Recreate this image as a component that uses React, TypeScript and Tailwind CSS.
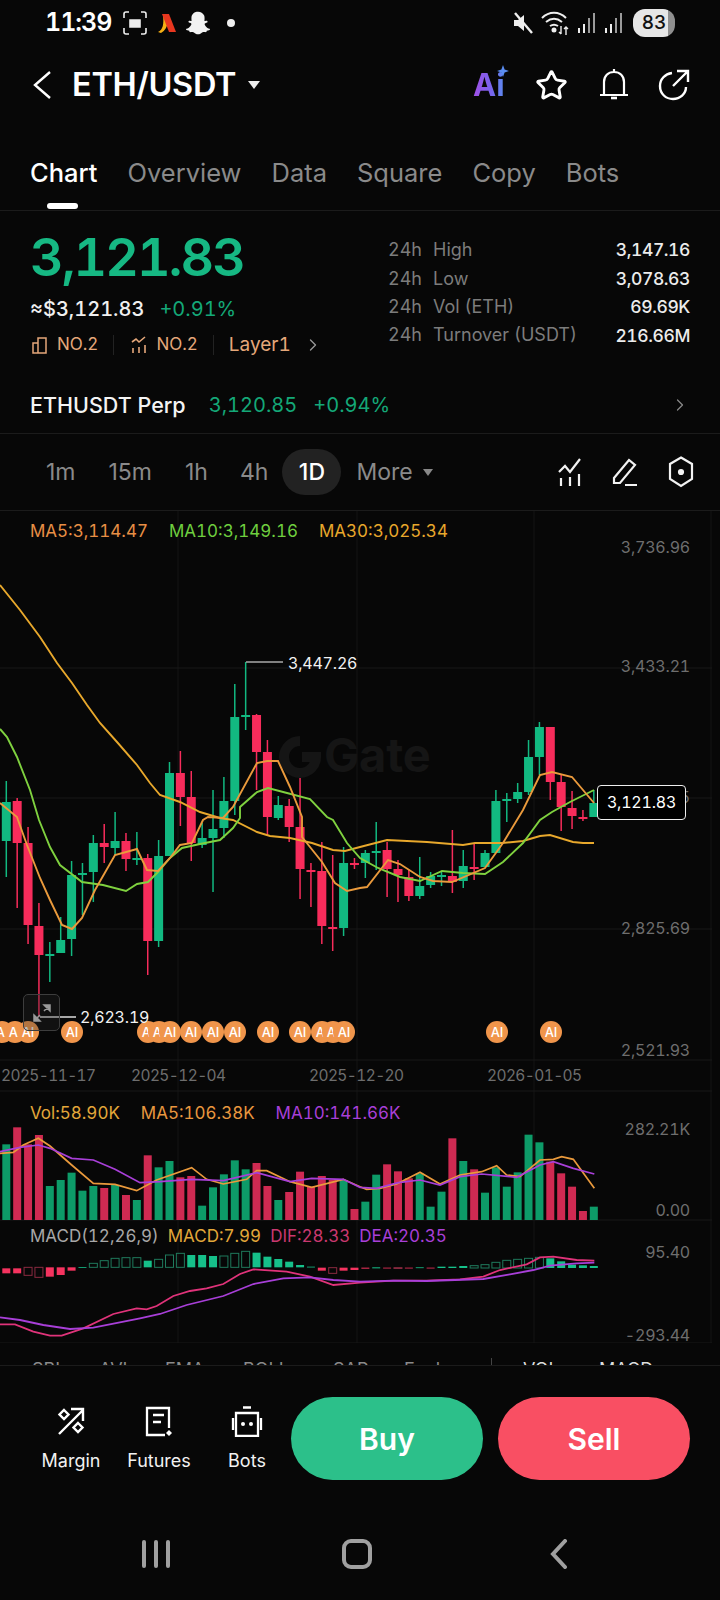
import { Star, ChevronRight } from 'lucide-react'
import { FaSnapchatGhost } from 'react-icons/fa'

// open/close drawn in screen px: [high, bodyTop, bodyBottom, low, up?]
const candles: [number, number, number, number, number][] = [
  [781, 802, 841, 877, 1], [798, 801, 843, 908, 0], [827, 843, 925, 944, 0], [903, 926, 955, 1017, 0],
  [942, 954, 955, 982, 1], [917, 940, 953, 953, 1], [861, 875, 939, 956, 1], [863, 873, 874, 915, 1],
  [835, 843, 872, 902, 1], [824, 843, 847, 863, 0], [812, 841, 848, 855, 1], [833, 841, 859, 871, 0],
  [832, 858, 859, 865, 1], [854, 858, 941, 975, 0], [840, 856, 941, 947, 1], [762, 773, 856, 856, 1],
  [751, 773, 797, 826, 0], [771, 797, 843, 861, 0], [823, 838, 845, 848, 1], [790, 829, 838, 892, 1],
  [777, 801, 828, 838, 1], [684, 717, 801, 815, 1], [662, 715, 717, 730, 1], [714, 715, 752, 790, 0],
  [740, 752, 817, 835, 0], [796, 805, 818, 820, 1], [799, 806, 827, 842, 0], [778, 827, 869, 899, 0],
  [863, 870, 871, 907, 0], [842, 871, 926, 944, 0], [855, 927, 928, 951, 0], [847, 863, 928, 936, 1],
  [858, 863, 864, 869, 0], [850, 853, 863, 878, 1], [822, 851, 853, 870, 1], [842, 850, 869, 897, 0],
  [860, 869, 875, 902, 0], [870, 877, 896, 901, 0], [857, 886, 896, 899, 1], [872, 876, 885, 888, 1],
  [872, 875, 876, 886, 1], [830, 876, 882, 893, 0], [850, 866, 881, 888, 1], [843, 867, 868, 880, 0],
  [850, 853, 867, 867, 1], [790, 801, 853, 853, 1], [793, 799, 800, 822, 1], [783, 792, 799, 803, 1],
  [740, 757, 792, 795, 1], [722, 727, 757, 775, 1], [727, 727, 782, 800, 0], [775, 782, 807, 831, 0],
  [791, 808, 816, 829, 0], [810, 817, 818, 821, 0], [790, 803, 817, 817, 1],
]

const ma30 = '0,585 20,610 40,637 57,663 72,683 87,705 100,723 117,742 137,765 150,783 160,795 180,802 200,812 220,818 233,820 257,832 270,836 290,838 312,843 333,850 345,851 360,847 387,840 427,842 463,845 475,843 502,843 523,841 540,836 550,835 573,842 583,843 594,843'
const ma10 = '0,729 7,737 17,757 30,790 39,820 50,847 60,865 82,882 103,885 126,891 137,884 148,882 158,872 170,858 182,848 200,844 220,840 233,828 240,818 240,807 257,792 268,788 287,793 310,799 327,817 333,820 347,843 360,858 378,868 400,877 420,881 442,871 463,873 485,874 503,862 523,843 540,820 552,812 570,802 594,790'
const ma5 = '0,803 17,817 18,820 27,845 40,878 50,900 62,925 72,929 82,918 95,890 115,855 137,849 147,870 158,871 170,858 180,845 192,843 203,820 208,817 223,818 233,807 257,763 267,761 278,761 290,787 302,817 302,837 322,862 335,883 347,891 360,888 367,887 388,860 400,864 420,877 433,881 452,882 485,868 503,843 523,810 540,775 552,772 572,777 594,803'

const volTop = [163, 112, 163, 135, 288, 270, 248, 302, 288, 294, 285, 315, 330, 196, 232, 213, 262, 258, 347, 292, 253, 211, 238, 219, 288, 330, 306, 245, 290, 258, 270, 270, 357, 335, 254, 223, 244, 265, 250, 350, 305, 145, 213, 238, 308, 232, 290, 247, 134, 157, 215, 250, 290, 363, 350]
const volUp = [1, 0, 0, 0, 1, 1, 1, 1, 1, 0, 1, 0, 1, 0, 1, 1, 0, 0, 1, 1, 1, 1, 1, 0, 0, 1, 0, 0, 0, 0, 0, 1, 0, 1, 1, 0, 0, 0, 1, 1, 1, 0, 1, 0, 1, 1, 1, 1, 1, 1, 0, 0, 0, 0, 1]

const volMa5 = [[0, 190], [40, 187], [70, 165], [115, 145], [150, 168], [215, 225], [280, 280], [345, 283], [410, 302], [470, 270], [575, 233], [620, 268], [670, 282], [740, 268], [770, 242], [800, 242], [870, 275], [935, 292], [1030, 268], [1080, 290], [1100, 298], [1140, 295], [1190, 282], [1260, 247], [1320, 282], [1380, 255], [1445, 245], [1490, 227], [1520, 255], [1560, 260], [1620, 210], [1660, 208], [1685, 200], [1720, 208], [1783, 295]]
const volMa10 = [[0, 185], [60, 172], [115, 165], [150, 175], [215, 205], [280, 210], [345, 238], [420, 278], [480, 275], [575, 268], [670, 272], [770, 248], [870, 275], [935, 265], [1030, 268], [1080, 292], [1130, 295], [1195, 278], [1260, 270], [1320, 285], [1380, 260], [1445, 252], [1550, 262], [1620, 225], [1660, 215], [1720, 235], [1783, 252]]
const dif = [[0, 703], [45, 703], [100, 725], [150, 737], [185, 737], [250, 715], [340, 672], [410, 655], [440, 658], [470, 648], [520, 618], [570, 603], [620, 595], [670, 582], [720, 552], [760, 538], [860, 545], [930, 560], [1000, 585], [1080, 578], [1180, 572], [1280, 572], [1380, 568], [1450, 560], [1500, 540], [1580, 523], [1620, 502], [1660, 500], [1730, 510], [1783, 512]]
const dea = [[0, 682], [60, 690], [130, 705], [210, 717], [280, 713], [420, 685], [480, 672], [560, 645], [670, 618], [760, 582], [850, 565], [930, 562], [1000, 570], [1080, 575], [1180, 572], [1280, 573], [1450, 567], [1530, 553], [1600, 540], [1650, 527], [1730, 520], [1783, 518]]

// macd bars: [top, bottom, kind] kind 0 red fill, 1 red hollow, 2 green fill, 3 green hollow
const macd: [number, number, number][] = [
  [535, 550, 0], [535, 550, 0], [532, 556, 1], [532, 562, 1], [532, 560, 0], [532, 555, 0], [532, 542, 0], [531, 533, 2],
  [520, 532, 3], [512, 532, 3], [505, 532, 3], [503, 532, 3], [503, 532, 3], [512, 532, 2], [508, 532, 3], [495, 532, 3],
  [490, 532, 3], [495, 532, 2], [495, 532, 2], [498, 532, 2], [498, 532, 3], [490, 532, 3], [484, 532, 3], [488, 532, 2],
  [500, 532, 2], [507, 532, 2], [515, 532, 2], [525, 532, 2], [530, 532, 2], [533, 542, 0], [533, 550, 1], [533, 542, 0],
  [533, 540, 0], [533, 536, 0], [532, 535, 2], [533, 535, 0], [533, 534, 1], [533, 534, 0], [532, 534, 2], [533, 534, 0],
  [530, 534, 2], [530, 534, 2], [528, 534, 2], [527, 534, 3], [524, 534, 3], [517, 534, 3], [511, 534, 3], [508, 534, 3],
  [505, 534, 3], [502, 534, 3], [505, 534, 2], [514, 534, 2], [524, 534, 2], [526, 534, 2], [528, 534, 2],
]

const aiBadges = [2, 15, 28, 72, 148, 159, 170, 191, 213, 235, 268, 300, 322, 333, 344, 497, 551]

const cx = (i: number) => 6.3 + 10.88 * i
const toPts = (list: number[][], oy: number) => list.map(([x, y]) => `${x / 3},${oy + y / 3}`).join(' ')

const Stat = ({ label, value }: { label: string; value: string }) => (
  <div className="flex items-center h-[28.4px] text-[18px] leading-none">
    <span className="w-[45px] text-[#7c7c7c]">24h</span>
    <span className="text-[#7c7c7c]">{label}</span>
    <span className="ml-auto text-[#ececec] font-medium text-[17.5px] tracking-[-0.4px]">{value}</span>
  </div>
)

const BottomAction = ({ label, children }: { label: string; children: React.ReactNode }) => (
  <div className="flex flex-col items-center w-[88px]">
    <div className="h-[32px] flex items-center justify-center">{children}</div>
    <span className="mt-[13px] text-[18px] leading-[22px] text-[#f2f2f2]">{label}</span>
  </div>
)

export default function App() {
  return (
    <div className="w-[720px] h-[1600px] overflow-hidden bg-[#070707] text-white [font-family:Inter,sans-serif] tabular-nums flex flex-col">
      {/* status bar */}
      <div className="h-[46px] flex items-center pl-[45px] pr-[45px]">
        <span className="text-[25px] font-semibold w-[78px] tracking-[-1px]">11:39</span>
        <svg width="24" height="24" viewBox="0 0 24 24" fill="none" stroke="#eee" strokeWidth="1.6">
          <path d="M1 7V3q0-2 2-2h3M18 1h3q2 0 2 2v4M23 17v4q0 2-2 2h-3M6 23H3q-2 0-2-2v-4" />
          <path d="M7 9h10v7H7z" fill="#eee" />
        </svg>
        <svg width="20" height="24" viewBox="0 0 20 24" className="ml-[10px]">
          <path d="M1 21c5-2 6-8 5-17l5 4c0 7-3 12-7 14z" fill="#f5b014" />
          <path d="M5 3h7l7 18h-7z" fill="#e8371f" />
        </svg>
        <FaSnapchatGhost className="ml-[9px] text-[#f2f2f2] text-[24px]" />
        <div className="ml-[17px] w-[8px] h-[8px] rounded-full bg-[#eee]" />
        <div className="ml-auto flex items-center">
          <svg width="22" height="24" viewBox="0 0 22 24">
            <path d="M2 9h4l6-5v16l-6-5H2z" fill="#eee" />
            <path d="M3 2l17 20" stroke="#eee" strokeWidth="2.4" />
          </svg>
          <svg width="30" height="28" viewBox="0 0 30 28" fill="none" stroke="#eee" strokeWidth="2" className="ml-[7px]">
            <path d="M1 9c7-7 17-7 24 0M5 13c5-4 11-4 16 0M9 17c3-2 5-2 8 0" />
            <circle cx="13" cy="21" r="1.5" fill="#eee" />
            <path d="M20 17v8m-2-2l2 2M25 26v-8m-2 2l2-2 2 2" strokeWidth="1.4" />
          </svg>
          <svg width="19" height="22" viewBox="0 0 19 22" fill="#9a9a9a" className="ml-[6px]">
            <rect x="1" y="16" width="2" height="5" fill="#eee" />
            <rect x="6" y="12" width="2" height="9" fill="#eee" />
            <rect x="11" y="6" width="2" height="15" />
            <rect x="16" y="1" width="2" height="20" />
          </svg>
          <svg width="19" height="22" viewBox="0 0 19 22" fill="#9a9a9a" className="ml-[8px]">
            <rect x="1" y="16" width="2" height="5" fill="#eee" />
            <rect x="6" y="12" width="2" height="9" fill="#eee" />
            <rect x="11" y="6" width="2" height="15" />
            <rect x="16" y="1" width="2" height="20" />
          </svg>
          <div className="ml-[10px] w-[42px] h-[28px] rounded-[12px] bg-[linear-gradient(90deg,#e6e6e6_83%,#8f8f8f_83%)] text-[#111] text-[19px] font-medium leading-[28px] text-center">
            83
          </div>
        </div>
      </div>

      {/* header */}
      <div className="h-[78px] flex items-center pl-[32px] pr-[30px]">
        <svg width="20" height="30" viewBox="0 0 20 30" fill="none" stroke="#fff" strokeWidth="2.4">
          <path d="M18 2L3 15l15 13" />
        </svg>
        <span className="ml-[20px] text-[32.5px] font-semibold tracking-[-0.3px]">ETH/USDT</span>
        <svg width="14" height="10" viewBox="0 0 14 10" className="ml-[11px]">
          <path d="M1 1h12L7 9z" fill="#eee" />
        </svg>
        <div className="ml-auto flex items-center">
          <div className="relative w-[36px] h-[40px]">
            <span className="absolute left-0 top-[1px] text-[31px] leading-[38px] font-bold bg-[linear-gradient(90deg,#a24fe6,#7a63ec_55%,#5a8cf0)] bg-clip-text text-transparent">
              Ai
            </span>
            <svg width="12" height="12" viewBox="0 0 12 12" className="absolute left-[24px] top-[0px]">
              <path d="M6 0l1.6 4.4L12 6 7.6 7.6 6 12 4.4 7.6 0 6l4.4-1.6z" fill="#5a8cf0" />
            </svg>
          </div>
          <Star size={33} strokeWidth={2.1} className="ml-[26px] text-white" />
          <svg width="34" height="34" viewBox="0 0 34 34" fill="none" stroke="#fff" strokeWidth="2.2" className="ml-[29px]">
            <path d="M7 26V14c0-6 4-10 10-10s10 4 10 10v12M3 27h28M17 1v3" />
            <path d="M14 30h6" strokeWidth="2.6" />
          </svg>
          <svg width="32" height="32" viewBox="0 0 32 32" fill="none" stroke="#fff" strokeWidth="2.4" className="ml-[27px]">
            <path d="M14 4C7 5 2 10 2 17c0 8 6 13 13 13s13-5 13-12" />
            <path d="M15 17L29 3M19 2h11v11" />
          </svg>
        </div>
      </div>

      {/* tabs */}
      <div className="relative h-[87px] border-b border-[#1b1b1b] flex items-start pt-[32px] pl-[30px] gap-[30px] text-[25.5px] leading-[34px] text-[#8a8a8a]">
        <span className="text-white font-medium">Chart</span>
        <span>Overview</span>
        <span>Data</span>
        <span>Square</span>
        <span>Copy</span>
        <span>Bots</span>
        <div className="absolute left-[47px] bottom-[1px] w-[31px] h-[6px] rounded-full bg-white" />
      </div>

      {/* price info */}
      <div className="h-[160px] flex pl-[30px] pr-[30px]">
        <div className="w-[358px]">
          <div className="mt-[12px] text-[52px] leading-[70px] font-semibold text-[#16b883] tracking-[-2px]">3,121.83</div>
          <div className="mt-[2px] flex items-center h-[28px] text-[20px]">
            <span className="text-[#f0f0f0] font-medium">≈$3,121.83</span>
            <span className="ml-[15px] text-[#14a878]">+0.91%</span>
          </div>
          <div className="mt-[10px] flex items-center h-[24px] text-[17px] text-[#e5a77a]">
            <svg width="16" height="18" viewBox="0 0 16 18" fill="none" stroke="#e5a77a" strokeWidth="1.5" className="ml-[2px]">
              <path d="M1 7h5v10H1zM6 17V2h8v15H6" />
            </svg>
            <span className="ml-[9px]">NO.2</span>
            <div className="ml-[15px] w-px h-[20px] bg-[#222]" />
            <svg width="16" height="18" viewBox="0 0 16 18" fill="none" stroke="#e5a77a" strokeWidth="1.6" className="ml-[17px]">
              <path d="M2 17v-5M8 17v-6M14 17V9M1 6l4-3 3 3 6-5" />
            </svg>
            <span className="ml-[9px]">NO.2</span>
            <div className="ml-[15px] w-px h-[20px] bg-[#222]" />
            <span className="ml-[15px] text-[19px]">Layer1</span>
            <ChevronRight size={20} strokeWidth={1.6} className="ml-[12px] text-[#999]" />
          </div>
        </div>
        <div className="flex-1 pt-[25px]">
          <Stat label="High" value="3,147.16" />
          <Stat label="Low" value="3,078.63" />
          <Stat label="Vol (ETH)" value="69.69K" />
          <Stat label="Turnover (USDT)" value="216.66M" />
        </div>
      </div>

      {/* perp row */}
      <div className="h-[63px] border-b border-[#1b1b1b] flex items-center pl-[30px] pr-[30px] pt-[6px] text-[20px]">
        <span className="font-medium text-[#f4f4f4] text-[21.5px]">ETHUSDT Perp</span>
        <span className="ml-[23px] text-[#14a878]">3,120.85</span>
        <span className="ml-[16px] text-[#14a878]">+0.94%</span>
        <ChevronRight size={20} strokeWidth={1.5} className="ml-auto text-[#888]" />
      </div>

      {/* timeframe row */}
      <div className="h-[76px] flex items-center pl-[46px] pr-[26px] text-[23px] text-[#8a8a8a] [font-variant-numeric:normal]">
        <span>1m</span>
        <span className="ml-[33px]">15m</span>
        <span className="ml-[33px]">1h</span>
        <span className="ml-[32px]">4h</span>
        <span className="ml-[14px] w-[59px] h-[46px] rounded-[23px] bg-[#222] text-white font-medium text-center leading-[46px]">1D</span>
        <span className="ml-[15px]">More</span>
        <svg width="12" height="9" viewBox="0 0 12 9" className="ml-[9px]">
          <path d="M1 1h10L6 8z" fill="#888" />
        </svg>
        <div className="ml-auto flex items-center gap-[30px]">
          <svg width="24" height="30" viewBox="0 0 24 30" fill="none" stroke="#f2f2f2" strokeWidth="2.2">
            <path d="M1 15l6-6 5 6 10-13M3 29v-8M12 29v-9M21 29V17" />
          </svg>
          <svg width="26" height="30" viewBox="0 0 26 30" fill="none" stroke="#f2f2f2" strokeWidth="2.2">
            <path d="M2 21L17 3l6 5L8 26H2zM13 28h12" />
          </svg>
          <svg width="26" height="32" viewBox="0 0 26 32" fill="none" stroke="#f2f2f2" strokeWidth="2.2">
            <path d="M13 1.5l11 6.5v15l-11 7-11-7V8z" />
            <circle cx="13" cy="16" r="2" fill="#f2f2f2" />
          </svg>
        </div>
      </div>

      {/* chart canvas */}
      <div className="relative h-[832px] border-t border-[#1b1b1b] text-[16px] tracking-[-0.2px]">
        <svg width="720" height="832" viewBox="0 511 720 832" className="absolute inset-0">
          {[178, 357, 534, 711].map((x) => (
            <line key={x} x1={x} x2={x} y1="511" y2="1343" stroke="#141414" />
          ))}
          {[668, 798, 929, 1060, 1091, 1220, 1343].map((y) => (
            <line key={y} x1="0" x2="712" y1={y} y2={y} stroke="#191919" />
          ))}

          {/* watermark */}
          <path d="M300 741a16 16 0 1 0 16 16h-14" fill="none" stroke="#151515" strokeWidth="10" />
          <text x="324" y="772" fontFamily="Inter" fontWeight="700" fontSize="47" fill="#151515">Gate</text>

          {candles.map(([h, t, b, l, up], i) => {
            const c = up ? '#12b981' : '#f72c5b'
            return (
              <g key={i}>
                <line x1={cx(i)} x2={cx(i)} y1={h} y2={l} stroke={c} strokeWidth="1.5" />
                <rect x={cx(i) - 4.5} y={t} width="9" height={Math.max(b - t, 2)} fill={c} />
              </g>
            )
          })}

          <polyline points={ma30} fill="none" stroke="#e8a82c" strokeWidth="1.9" />
          <polyline points={ma10} fill="none" stroke="#7fd13f" strokeWidth="1.9" />
          <polyline points={ma5} fill="none" stroke="#ea9a3c" strokeWidth="1.9" />

          {/* high / low markers */}
          <path d="M246 662h37" stroke="#aaa" strokeWidth="1.4" fill="none" />
          <path d="M40 1017h36" stroke="#ddd" strokeWidth="1.4" fill="none" />

          {/* ai badges */}
          {aiBadges.map((x) => (
            <g key={x}>
              <circle cx={x} cy="1032" r="11" fill="#f0954b" />
              <text x={x} y="1037" textAnchor="middle" fontFamily="Inter" fontSize="13" fontWeight="500" fill="#fff">AI</text>
            </g>
          ))}

          {/* volume */}
          {volTop.map((t, i) => (
            <rect key={i} x={cx(i) - 4} y={1090 + t / 3} width="8" height={1220 - (1090 + t / 3)} fill={volUp[i] ? '#0d9b68' : '#cf2a52'} />
          ))}
          <polyline points={toPts(volMa5, 1090)} fill="none" stroke="#ea9a3c" strokeWidth="1.7" />
          <polyline points={toPts(volMa10, 1090)} fill="none" stroke="#a83fd8" strokeWidth="1.7" />

          {/* macd */}
          {macd.map(([t, b, k], i) => {
            const c = k < 2 ? '#f5335f' : '#16c08a'
            const hollow = k === 1 || k === 3
            return (
              <rect
                key={i}
                x={cx(i) - 4}
                y={1090 + t / 3}
                width="8"
                height={Math.max((b - t) / 3, 0.8)}
                fill={hollow ? 'none' : c}
                stroke={hollow ? (k === 1 ? '#8a2a40' : '#1f7a5c') : 'none'}
              />
            )
          })}
          <polyline points={toPts(dif, 1090)} fill="none" stroke="#e0337a" strokeWidth="1.8" />
          <polyline points={toPts(dea, 1090)} fill="none" stroke="#a83fd8" strokeWidth="1.8" />
        </svg>

        {/* legends */}
        <div className="absolute left-[30px] top-[9px] flex gap-[21px] leading-[22px] text-[17px] tracking-normal">
          <span className="text-[#e88f45]">MA5:3,114.47</span>
          <span className="text-[#6fcf3f]">MA10:3,149.16</span>
          <span className="text-[#e8a82c]">MA30:3,025.34</span>
        </div>
        <div className="absolute left-[30px] top-[591px] flex gap-[21px] leading-[22px] text-[17px] tracking-normal">
          <span className="text-[#e3a73a]">Vol:58.90K</span>
          <span className="text-[#e9973f]">MA5:106.38K</span>
          <span className="text-[#a83fd8]">MA10:141.66K</span>
        </div>
        <div className="absolute left-[30px] top-[714px] flex gap-[9px] leading-[22px] text-[17px] tracking-normal">
          <span className="text-[#a8a8a8]">MACD(12,26,9)</span>
          <span className="text-[#e3a73a]">MACD:7.99</span>
          <span className="text-[#c9386f]">DIF:28.33</span>
          <span className="text-[#a83fd8]">DEA:20.35</span>
        </div>

        {/* axis */}
        <span className="absolute right-[30px] top-[25px] leading-[22px] text-[#6e6e6e]">3,736.96</span>
        <span className="absolute right-[30px] top-[144px] leading-[22px] text-[#6e6e6e]">3,433.21</span>
        <span className="absolute right-[30px] top-[275px] leading-[22px] text-[#6e6e6e]">3,129.45</span>
        <span className="absolute right-[30px] top-[406px] leading-[22px] text-[#6e6e6e]">2,825.69</span>
        <span className="absolute right-[30px] top-[528px] leading-[22px] text-[#6e6e6e]">2,521.93</span>
        <span className="absolute right-[30px] top-[607px] leading-[22px] text-[#6e6e6e]">282.21K</span>
        <span className="absolute right-[30px] top-[688px] leading-[22px] text-[#6e6e6e]">0.00</span>
        <span className="absolute right-[30px] top-[730px] leading-[22px] text-[#6e6e6e]">95.40</span>
        <span className="absolute right-[30px] top-[813px] leading-[22px] text-[#6e6e6e]">-293.44</span>

        <span className="absolute left-[1px] top-[554px] leading-[22px] text-[15.5px] tracking-[-0.6px] text-[#6e6e6e]">2025-11-17</span>
        <span className="absolute left-[131px] top-[554px] leading-[22px] text-[15.5px] tracking-[-0.6px] text-[#6e6e6e]">2025-12-04</span>
        <span className="absolute left-[309px] top-[554px] leading-[22px] text-[15.5px] tracking-[-0.6px] text-[#6e6e6e]">2025-12-20</span>
        <span className="absolute left-[487px] top-[554px] leading-[22px] text-[15.5px] tracking-[-0.6px] text-[#6e6e6e]">2026-01-05</span>

        {/* price callouts */}
        <span className="absolute left-[288px] top-[141px] leading-[22px] text-[#f2f2f2]">3,447.26</span>
        <span className="absolute left-[80px] top-[495px] leading-[22px] text-[#f2f2f2]">2,623.19</span>
        <div className="absolute left-[597px] top-[274px] w-[89px] h-[35px] bg-black border border-[#eee] rounded-[4px] text-center leading-[33px] text-white">
          3,121.83
        </div>

        {/* expand button */}
        <div className="absolute left-[23px] top-[483px] w-[37px] h-[37px] rounded-[5px] border border-[#3d3d3d] bg-[#2a2a2a]/30 flex items-center justify-center">
          <svg width="20" height="20" viewBox="0 0 20 20" fill="#9a9a9a" stroke="#9a9a9a" strokeWidth="1.5">
            <path d="M12 2h6v6zM2 12v6h6zM16 4l-4 4M4 16l4-4" />
          </svg>
        </div>
      </div>

      {/* indicator tabs, cut off by the bottom bar */}
      <div className="h-[24px] border-b border-[#1b1b1b] overflow-hidden relative">
        <div className="flex pl-[32px] pt-[17px] text-[18px] leading-[22px] text-[#8a8a8a]">
          <span className="w-[67px]">SBL</span>
          <span className="w-[66px]">AVL</span>
          <span className="w-[78px]">EMA</span>
          <span className="w-[90px]">BOLL</span>
          <span className="w-[71px]">SAR</span>
          <span className="w-[119px]">Ench</span>
          <span className="w-[76px] text-[#ddd]">VOL</span>
          <span className="text-[#ddd]">MACD</span>
        </div>
        <div className="absolute left-[491px] bottom-0 w-px h-[7px] bg-[#444]" />
      </div>

      {/* bottom actions */}
      <div className="h-[143px] flex items-start pt-[31px] pl-[27px] pr-[30px]">
        <div className="flex w-[264px] pt-[8px]">
          <BottomAction label="Margin">
            <svg width="28" height="28" viewBox="0 0 28 28" fill="none" stroke="#fff" strokeWidth="2.4">
              <path d="M2 27L26 3M14 2h12v12" />
              <path d="M7 3l4.5 4.5L7 12 2.500 7.500zM21 16l4.500 4.500L21 25l-4.500-4.500z" />
            </svg>
          </BottomAction>
          <BottomAction label="Futures">
            <svg width="28" height="31" viewBox="0 0 28 31" fill="none" stroke="#fff" strokeWidth="2.300">
              <path d="M24 22V2H2v27h18M8 9h11M8 16h8" />
              <path d="M24 24l3 3-3 3-3-3z" fill="#fff" stroke="none" />
            </svg>
          </BottomAction>
          <BottomAction label="Bots">
            <svg width="32" height="31" viewBox="0 0 32 31" fill="none" stroke="#fff" strokeWidth="2.300">
              <path d="M5 7h22v23H5zM12 1.500h8M2 12v12M30 12v12" />
              <circle cx="12" cy="18" r="2" fill="#fff" stroke="none" />
              <circle cx="20" cy="18" r="2" fill="#fff" stroke="none" />
            </svg>
          </BottomAction>
        </div>
        <div className="w-[192px] h-[83px] rounded-[42px] bg-[#2cc08a] text-center text-[30px] leading-[84px] font-semibold">Buy</div>
        <div className="ml-[15px] w-[192px] h-[83px] rounded-[42px] bg-[#f94f63] text-center text-[30px] leading-[84px] font-semibold">Sell</div>
      </div>

      {/* android nav */}
      <div className="flex-1 relative">
        <div className="absolute left-[142px] top-[31px] flex gap-[8px]">
          <div className="w-[4px] h-[28px] rounded-full bg-[#a0a0a0]" />
          <div className="w-[4px] h-[28px] rounded-full bg-[#a0a0a0]" />
          <div className="w-[4px] h-[28px] rounded-full bg-[#a0a0a0]" />
        </div>
        <div className="absolute left-[342px] top-[30px] w-[30px] h-[30px] rounded-[9px] border-[4px] border-[#a0a0a0]" />
        <svg width="20" height="30" viewBox="0 0 20 30" fill="none" stroke="#a0a0a0" strokeWidth="4" strokeLinecap="round" className="absolute left-[549px] top-[30px]">
          <path d="M16 2L4 15l12 13" />
        </svg>
      </div>
    </div>
  )
}
